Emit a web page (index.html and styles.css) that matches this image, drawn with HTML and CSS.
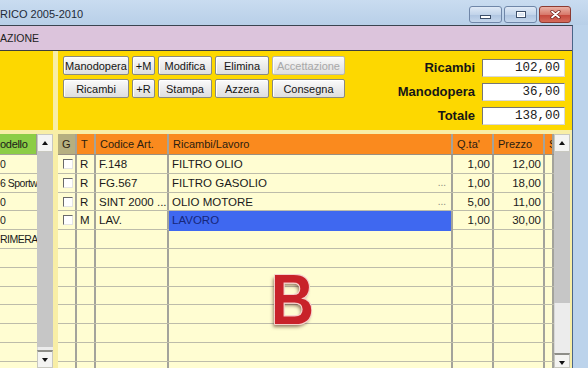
FILE: index.html
```html
<!DOCTYPE html>
<html lang="it">
<head>
    <meta charset="UTF-8">
    <title>Officina - Storico 2005-2010</title>
    <link rel="stylesheet" href="styles.css">
</head>
<body>

    <div class="titlebar">
        <span class="title">RICO 2005-2010</span>
        <div class="controls">
            <span class="ctl"><i class="ico-min"></i></span>
            <span class="ctl"><i class="ico-max"></i></span>
            <span class="ctl close">
                <svg width="11" height="9" viewBox="0 0 11 9"><path d="M2 1.5 L9 7.5 M9 1.5 L2 7.5" stroke="#6b1c16" stroke-width="3.2" stroke-linecap="round"/><path d="M2 1.5 L9 7.5 M9 1.5 L2 7.5" stroke="#fff" stroke-width="1.8" stroke-linecap="round"/></svg>
            </span>
        </div>
    </div>

    <div class="window">
        <div class="menubar">AZIONE</div>

        <div class="main">
            <div class="side-top"></div>

            <div class="toolbar">
                <div class="buttons">
                    <button>Manodopera</button>
                    <button>+M</button>
                    <button>Modifica</button>
                    <button>Elimina</button>
                    <button class="disabled">Accettazione</button>
                    <button>Ricambi</button>
                    <button>+R</button>
                    <button>Stampa</button>
                    <button>Azzera</button>
                    <button>Consegna</button>
                </div>

                <div class="totals">
                    <label>Ricambi</label>
                    <div class="box">102,00</div>
                    <label>Manodopera</label>
                    <div class="box">36,00</div>
                    <label>Totale</label>
                    <div class="box">138,00</div>
                </div>
            </div>

            <!-- elenco veicoli (tagliato a sinistra) -->
            <div class="side-grid">
                <div class="side-table">
                    <div class="side-head">odello</div>
                    <div class="side-row">0</div>
                    <div class="side-row">6 Sportw</div>
                    <div class="side-row">0</div>
                    <div class="side-row">0</div>
                    <div class="side-row">RIMERA</div>
                    <div class="side-row"></div>
                    <div class="side-row"></div>
                    <div class="side-row"></div>
                    <div class="side-row"></div>
                    <div class="side-row"></div>
                    <div class="side-row"></div>
                    <div class="side-row"></div>
                </div>
                <div class="vscroll">
                    <div class="sb-btn up"></div>
                    <div class="sb-thumb left-thumb"></div>
                    <div class="sb-track left-track"></div>
                    <div class="sb-btn down"></div>
                </div>
            </div>

            <!-- righe lavoro -->
            <div class="grid">
                <div class="table">
                    <div class="row head">
                        <div class="cell h-g">G</div>
                        <div class="cell">T</div>
                        <div class="cell">Codice Art.</div>
                        <div class="cell">Ricambi/Lavoro</div>
                        <div class="cell">Q.ta'</div>
                        <div class="cell">Prezzo</div>
                        <div class="cell">S</div>
                    </div>
                    <div class="row">
                        <div class="cell"><span class="chk"></span></div>
                        <div class="cell">R</div>
                        <div class="cell">F.148</div>
                        <div class="cell">FILTRO OLIO</div>
                        <div class="cell num">1,00</div>
                        <div class="cell num">12,00</div>
                        <div class="cell"></div>
                    </div>
                    <div class="row">
                        <div class="cell"><span class="chk"></span></div>
                        <div class="cell">R</div>
                        <div class="cell">FG.567</div>
                        <div class="cell desc">FILTRO GASOLIO<span class="more">...</span></div>
                        <div class="cell num">1,00</div>
                        <div class="cell num">18,00</div>
                        <div class="cell"></div>
                    </div>
                    <div class="row">
                        <div class="cell"><span class="chk"></span></div>
                        <div class="cell">R</div>
                        <div class="cell">SINT 2000 ...</div>
                        <div class="cell desc">OLIO MOTORE<span class="more">...</span></div>
                        <div class="cell num">5,00</div>
                        <div class="cell num">11,00</div>
                        <div class="cell"></div>
                    </div>
                    <div class="row">
                        <div class="cell"><span class="chk"></span></div>
                        <div class="cell">M</div>
                        <div class="cell">LAV.</div>
                        <div class="cell selected">LAVORO</div>
                        <div class="cell num">1,00</div>
                        <div class="cell num">30,00</div>
                        <div class="cell"></div>
                    </div>
                    <div class="row"><div class="cell"></div><div class="cell"></div><div class="cell"></div><div class="cell"></div><div class="cell"></div><div class="cell"></div><div class="cell"></div></div>
                    <div class="row"><div class="cell"></div><div class="cell"></div><div class="cell"></div><div class="cell"></div><div class="cell"></div><div class="cell"></div><div class="cell"></div></div>
                    <div class="row"><div class="cell"></div><div class="cell"></div><div class="cell"></div><div class="cell"></div><div class="cell"></div><div class="cell"></div><div class="cell"></div></div>
                    <div class="row"><div class="cell"></div><div class="cell"></div><div class="cell"></div><div class="cell"></div><div class="cell"></div><div class="cell"></div><div class="cell"></div></div>
                    <div class="row"><div class="cell"></div><div class="cell"></div><div class="cell"></div><div class="cell"></div><div class="cell"></div><div class="cell"></div><div class="cell"></div></div>
                    <div class="row"><div class="cell"></div><div class="cell"></div><div class="cell"></div><div class="cell"></div><div class="cell"></div><div class="cell"></div><div class="cell"></div></div>
                    <div class="row"><div class="cell"></div><div class="cell"></div><div class="cell"></div><div class="cell"></div><div class="cell"></div><div class="cell"></div><div class="cell"></div></div>
                    <div class="row"><div class="cell"></div><div class="cell"></div><div class="cell"></div><div class="cell"></div><div class="cell"></div><div class="cell"></div><div class="cell"></div></div>
                </div>
                <div class="vscroll">
                    <div class="sb-btn up"></div>
                    <div class="sb-thumb right-thumb"></div>
                    <div class="sb-track right-track"></div>
                    <div class="sb-btn down"></div>
                </div>

                <div class="badge">B</div>
            </div>
        </div>
    </div>

</body>
</html>
```

FILE: styles.css
```css
body {
    margin: 0;
    width: 588px;
    height: 368px;
    overflow: hidden;
    background-color: #bcd3eb;
    font-family: 'Liberation Sans', Arial, sans-serif;
    font-size: 11px;
    color: #1a1a1a;
}

/* barra del titolo */
.titlebar {
    height: 25px;
    display: flex;
    align-items: center;
    justify-content: space-between;
    background: linear-gradient(#c9dcf0, #b8cfe8);
}

.title {
    font-size: 11px;
    color: #1e2a38;
    margin-top: 3px;
}

.controls {
    display: flex;
    gap: 2px;
    margin-right: 17px;
    margin-top: 3px;
}

.ctl {
    width: 31px;
    height: 15px;
    border: 1px solid #6f86a8;
    border-radius: 3px;
    background: linear-gradient(#dfe9f6, #c2d4ea 50%, #aec4e0 51%, #c4d6ec);
    display: flex;
    align-items: center;
    justify-content: center;
}

.ctl.close {
    width: 30px;
    border-color: #8c3b32;
    background: linear-gradient(#eab2a6, #d87a6c 50%, #c4463a 51%, #d56a5a);
}

.ico-min {
    width: 9px;
    height: 2px;
    margin-top: 6px;
    background: #fff;
    border: 1px solid #3d4f6a;
}

.ico-max {
    width: 8px;
    height: 5px;
    border: 1px solid #3d4f6a;
    box-shadow: inset 0 0 0 1px #fff;
    background: #dfe8f4;
}

/* finestra */
.window {
    width: 572px;
    height: 342px;
    border-top: 1px solid #3b4450;
    border-right: 1px solid #4a6588;
    display: flex;
    flex-direction: column;
}

.menubar {
    height: 24px;
    line-height: 24px;
    background-color: #dcc4dc;
    border-bottom: 1px solid #3e3e3e;
    font-size: 10.5px;
    color: #222;
}

.main {
    flex: 1;
    display: grid;
    grid-template-columns: 53px 1fr;
    grid-template-rows: 79px 1fr;
    column-gap: 5px;
    row-gap: 4px;
    background-color: #f8eea6;
    min-height: 0;
}

.side-top {
    background-color: #fdd800;
}

.toolbar {
    background-color: #fdd800;
    display: flex;
    align-items: flex-start;
    padding: 5px 7px 0 5px;
}

.buttons {
    display: grid;
    grid-template-columns: 66px 23px 54px 54px 73px;
    grid-auto-rows: 19px;
    column-gap: 3px;
    row-gap: 4px;
}

.buttons button {
    font-family: 'Liberation Sans', Arial, sans-serif;
    font-size: 11px;
    color: #151515;
    padding: 0;
    border: 1px solid #8a8a80;
    border-radius: 2px;
    background: linear-gradient(#fbfbfb, #ececec 50%, #dedede);
    box-shadow: inset 1px 1px 0 #fff;
}

.buttons button.disabled {
    color: #a8a8a8;
    border-color: #b8b8ac;
}

.totals {
    margin-left: auto;
    margin-top: 3px;
    display: grid;
    grid-template-columns: auto 83px;
    grid-auto-rows: 18px;
    column-gap: 7px;
    row-gap: 6px;
}

.totals label {
    font-weight: bold;
    font-size: 13px;
    text-align: right;
    line-height: 18px;
    color: #161616;
}

.box {
    background-color: #fff;
    border: 1px solid;
    border-color: #767676 #d8d8d8 #d8d8d8 #767676;
    font-family: 'Liberation Mono', 'Courier New', monospace;
    font-size: 12.5px;
    line-height: 16px;
    text-align: right;
    padding-right: 4px;
    color: #202020;
}

/* griglia veicoli */
.side-grid {
    display: flex;
    overflow: hidden;
}

.side-table {
    width: 37px;
    background-color: #fffdd2;
    overflow: hidden;
}

.side-head {
    height: 21px;
    line-height: 20px;
    box-sizing: border-box;
    background-color: #8ccd45;
    border-right: 1px solid #9a9a90;
    border-bottom: 1px solid #a6a698;
    white-space: nowrap;
    letter-spacing: -0.3px;
}

.side-row {
    height: 18.8px;
    line-height: 18px;
    box-sizing: border-box;
    border-bottom: 1.5px solid #bdbcaa;
    white-space: nowrap;
    overflow: hidden;
    font-size: 10.5px;
    letter-spacing: -0.5px;
}

/* griglia righe */
.grid {
    position: relative;
    display: flex;
    background-color: #f8eea6;
    padding-right: 2px;
    overflow: hidden;
}

.table {
    width: 496px;
    background-color: #fffdd2;
}

.row {
    display: grid;
    grid-template-columns: 19px 19px 73px 284px 41px 51px 9px;
    height: 18.8px;
    box-sizing: border-box;
    border-bottom: 1.5px solid #bdbcaa;
}

.row.head {
    height: 21px;
    background-color: #fa8a1e;
    border-bottom: 1px solid #9a9080;
}

.cell {
    border-right: 2px solid #a3a39b;
    padding-left: 3px;
    line-height: 18px;
    white-space: nowrap;
    overflow: hidden;
    font-size: 11.5px;
}

.row.head .cell {
    line-height: 20px;
    font-size: 11px;
    color: #2b1d10;
    padding-left: 4px;
}

.row.head .h-g {
    background-color: #b6af80;
}

.cell.num {
    text-align: right;
    padding: 0 2px 0 0;
}

.cell.desc {
    display: flex;
    justify-content: space-between;
    padding-right: 5px;
}

.more {
    color: #8a8a80;
    font-size: 10px;
}

.cell.selected {
    background-color: #3f68f0;
    color: #16267a;
    margin-bottom: -1.5px;
}

.chk {
    display: inline-block;
    width: 8px;
    height: 8px;
    margin: 4px 0 0 2px;
    vertical-align: top;
    background-color: #fff;
    border: 1px solid;
    border-color: #6a6a6a #e4e4e4 #e4e4e4 #6a6a6a;
}

/* barre di scorrimento */
.vscroll {
    width: 16px;
    display: flex;
    flex-direction: column;
    flex-shrink: 0;
}

.sb-btn {
    height: 18px;
    box-sizing: border-box;
    background-color: #f4f4f2;
    border: 1px solid #c8c8c0;
    position: relative;
}

.sb-btn::after {
    content: '';
    position: absolute;
    left: 4px;
    border-left: 3.5px solid transparent;
    border-right: 3.5px solid transparent;
}

.sb-btn.up::after {
    top: 6px;
    border-bottom: 4px solid #111;
}

.sb-btn.down {
    flex: 1;
    border-top: 2px solid #8e8e88;
}

.sb-btn.down::after {
    top: 6px;
    border-top: 4px solid #111;
}

.sb-thumb {
    background-color: #c6c6c6;
}

.sb-track {
    background-color: #ececec;
    border-left: 1px solid #d8d8d8;
}

.left-thumb { height: 195px; }
.left-track { height: 3px; }
.right-thumb { height: 151px; }
.right-track { height: 50px; }

/* lettera di richiamo */
.badge {
    position: absolute;
    left: 213px;
    top: 131px;
    font-size: 70px;
    line-height: 70px;
    font-weight: bold;
    color: #c8222a;
    transform: scaleX(0.85);
    transform-origin: left top;
    text-shadow:
        1px 0 0 #f6d2cc, -1px 0 0 #f6d2cc, 0 1px 0 #f6d2cc, 0 -1px 0 #f6d2cc,
        1px 1px 0 #f6d2cc, -1px -1px 0 #f6d2cc, 1px -1px 0 #f6d2cc, -1px 1px 0 #f6d2cc,
        -2px 3px 4px rgba(60, 20, 10, 0.55);
}
```
